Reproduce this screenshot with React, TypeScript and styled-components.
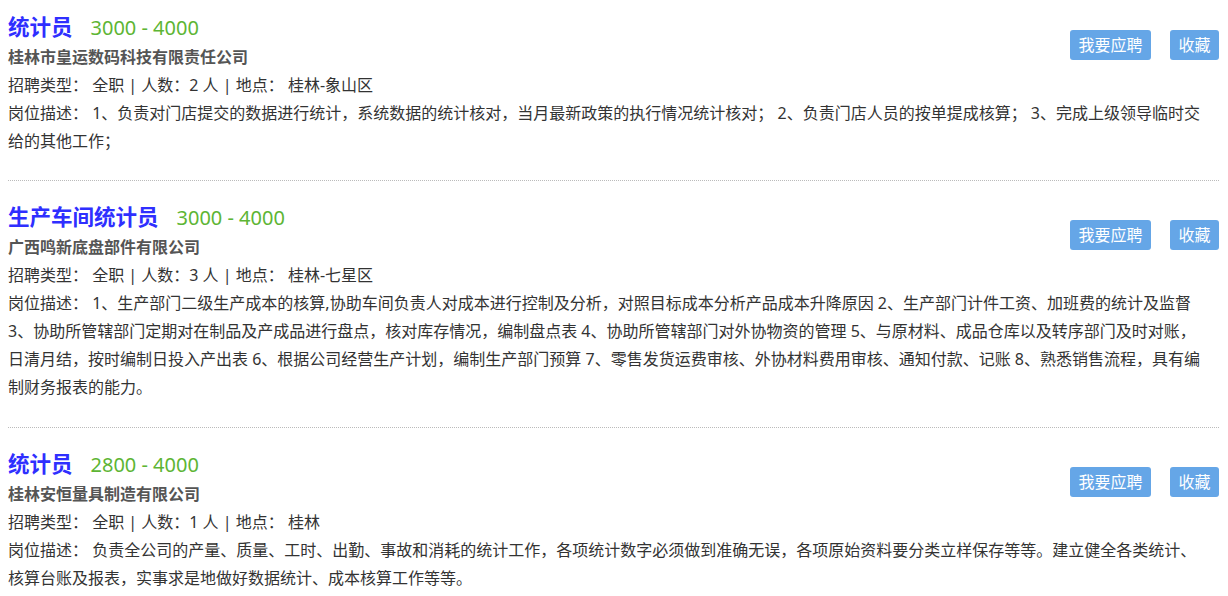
import React from "react";
import styled, { createGlobalStyle } from "styled-components";

const Global = createGlobalStyle`
  html, body { margin: 0; padding: 0; background: #fff; }
  body { font-family: "Noto Sans", "Noto Sans CJK SC", sans-serif; color: #333; }
`;

const Page = styled.div`
  padding: 0 9px 0 8px;
`;

const Card = styled.div`
  padding: 20px 0 26px;
  border-bottom: 1px dotted #bbb;
  &:first-child { padding-top: 11px; padding-bottom: 25px; }
`;

const Header = styled.div`
  display: flex;
  justify-content: space-between;
  align-items: flex-start;
`;

const TitleRow = styled.div`
  display: flex;
  align-items: baseline;
  height: 32px;
  line-height: 32px;
`;

const Title = styled.span`
  font-size: 21.5px;
  font-weight: bold;
  color: #2f2fff;
`;

const Salary = styled.span`
  font-size: 20px;
  color: #5db534;
  margin-left: 18px;
`;

const Company = styled.div`
  font-size: 16px;
  font-weight: bold;
  color: #555;
  line-height: 28px;
`;

const Actions = styled.div`
  display: flex;
  gap: 19px;
  margin-top: 19px;
`;

const Button = styled.button`
  height: 30px;
  padding: 0 8.5px;
  border: none;
  border-radius: 3px;
  background: #65a6e7;
  color: #fff;
  font-family: "Noto Sans", "Noto Sans CJK SC", sans-serif;
  font-size: 16px;
  line-height: 30px;
  cursor: pointer;
`;

const Line = styled.div`
  font-size: 16px;
  line-height: 28px;
  color: #333;
`;

type Job = {
  title: string;
  salary: string;
  company: string;
  count: string;
  place: string;
  desc: string[];
};

const jobs: Job[] = [
  {
    title: "统计员",
    salary: "3000 - 4000",
    company: "桂林市皇运数码科技有限责任公司",
    count: "2",
    place: "桂林-象山区",
    desc: [
      "1、负责对门店提交的数据进行统计，系统数据的统计核对，当月最新政策的执行情况统计核对； 2、负责门店人员的按单提成核算； 3、完成上级领导临时交",
      "给的其他工作；",
    ],
  },
  {
    title: "生产车间统计员",
    salary: "3000 - 4000",
    company: "广西鸣新底盘部件有限公司",
    count: "3",
    place: "桂林-七星区",
    desc: [
      "1、生产部门二级生产成本的核算,协助车间负责人对成本进行控制及分析，对照目标成本分析产品成本升降原因 2、生产部门计件工资、加班费的统计及监督",
      "3、协助所管辖部门定期对在制品及产成品进行盘点，核对库存情况，编制盘点表 4、协助所管辖部门对外协物资的管理 5、与原材料、成品仓库以及转序部门及时对账，",
      "日清月结，按时编制日投入产出表 6、根据公司经营生产计划，编制生产部门预算 7、零售发货运费审核、外协材料费用审核、通知付款、记账 8、熟悉销售流程，具有编",
      "制财务报表的能力。",
    ],
  },
  {
    title: "统计员",
    salary: "2800 - 4000",
    company: "桂林安恒量具制造有限公司",
    count: "1",
    place: "桂林",
    desc: [
      "负责全公司的产量、质量、工时、出勤、事故和消耗的统计工作，各项统计数字必须做到准确无误，各项原始资料要分类立样保存等等。建立健全各类统计、",
      "核算台账及报表，实事求是地做好数据统计、成本核算工作等等。",
    ],
  },
];

export default function App() {
  return (
    <>
      <Global />
      <Page>
        {jobs.map((j, i) => (
          <Card key={i}>
            <Header>
              <div>
                <TitleRow>
                  <Title>{j.title}</Title>
                  <Salary>{j.salary}</Salary>
                </TitleRow>
                <Company>{j.company}</Company>
              </div>
              <Actions>
                <Button>我要应聘</Button>
                <Button>收藏</Button>
              </Actions>
            </Header>
            <Line>
              招聘类型： 全职 | 人数：{j.count} 人 | 地点： {j.place}
            </Line>
            <Line>
              岗位描述：{" "}
              {j.desc.map((seg, k) => (
                <React.Fragment key={k}>
                  {k > 0 && <br />}
                  {seg}
                </React.Fragment>
              ))}
            </Line>
          </Card>
        ))}
      </Page>
    </>
  );
}
